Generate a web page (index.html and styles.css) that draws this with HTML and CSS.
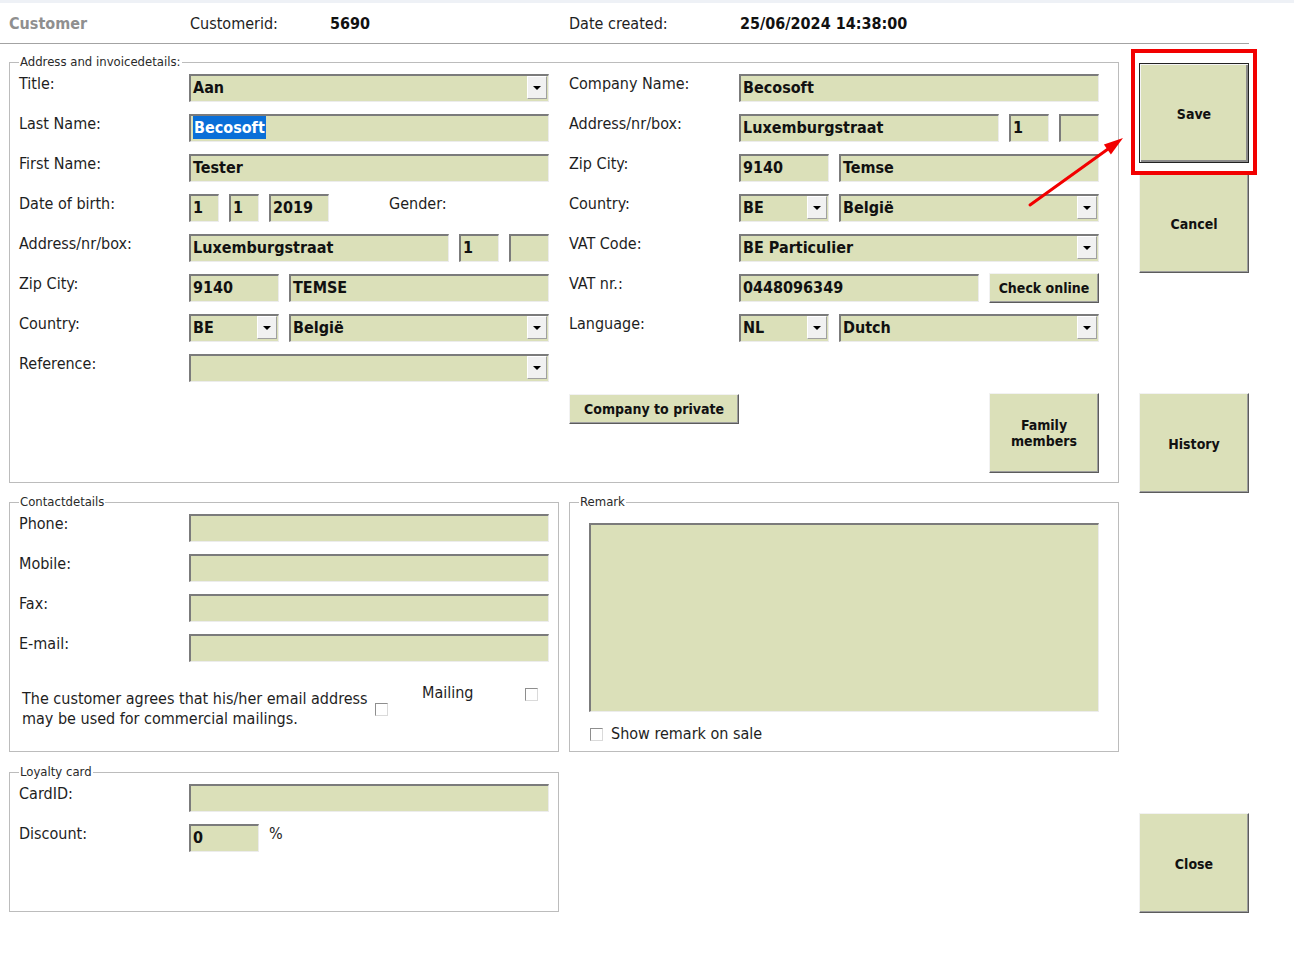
FILE: index.html
```html
<!DOCTYPE html>
<html lang="en">
  <head>
    <meta charset="UTF-8" />
    <meta name="viewport" content="width=device-width, initial-scale=1.0" />
    <title>Customer</title>
    <link rel="stylesheet" href="styles.css">
  </head>
  <body>
    <div class="top-strip"></div>

    <!-- header -->
    <div class="header">
      <span class="header-title">Customer</span>
      <span class="header-label">Customerid:</span>
      <span class="header-value header-id">5690</span>
      <span class="header-label header-date">Date created:</span>
      <span class="header-value">25/06/2024 14:38:00</span>
    </div>

    <div class="main">
      <div class="forms">
        <!-- address -->
        <fieldset class="group">
          <legend>Address and invoicedetails:</legend>
          <div class="address-cols">
            <div class="form-grid">
              <span class="label">Title:</span>
              <div class="field select"><span class="val">Aan</span><span class="drop"></span></div>

              <span class="label">Last Name:</span>
              <div class="field"><span class="val"><span class="picked">Becosoft</span></span></div>

              <span class="label">First Name:</span>
              <div class="field"><span class="val">Tester</span></div>

              <span class="label">Date of birth:</span>
              <div class="field-row">
                <div class="field w30"><span class="val">1</span></div>
                <div class="field w30"><span class="val">1</span></div>
                <div class="field w60"><span class="val">2019</span></div>
                <span class="label gender">Gender:</span>
              </div>

              <span class="label">Address/nr/box:</span>
              <div class="field-row">
                <div class="field w260"><span class="val">Luxemburgstraat</span></div>
                <div class="field w40"><span class="val">1</span></div>
                <div class="field w40"><span class="val"></span></div>
              </div>

              <span class="label">Zip City:</span>
              <div class="field-row">
                <div class="field w90"><span class="val">9140</span></div>
                <div class="field w260"><span class="val">TEMSE</span></div>
              </div>

              <span class="label">Country:</span>
              <div class="field-row">
                <div class="field select w90"><span class="val">BE</span><span class="drop"></span></div>
                <div class="field select w260"><span class="val">België</span><span class="drop"></span></div>
              </div>

              <span class="label">Reference:</span>
              <div class="field select"><span class="val"></span><span class="drop"></span></div>
            </div>

            <div class="right-col">
              <div class="form-grid rows-8">
                <span class="label">Company Name:</span>
                <div class="field"><span class="val">Becosoft</span></div>

                <span class="label">Address/nr/box:</span>
                <div class="field-row">
                  <div class="field w260"><span class="val">Luxemburgstraat</span></div>
                  <div class="field w40"><span class="val">1</span></div>
                  <div class="field w40"><span class="val"></span></div>
                </div>

                <span class="label">Zip City:</span>
                <div class="field-row">
                  <div class="field w90"><span class="val">9140</span></div>
                  <div class="field w260"><span class="val">Temse</span></div>
                </div>

                <span class="label">Country:</span>
                <div class="field-row">
                  <div class="field select w90"><span class="val">BE</span><span class="drop"></span></div>
                  <div class="field select w260"><span class="val">België</span><span class="drop"></span></div>
                </div>

                <span class="label">VAT Code:</span>
                <div class="field select"><span class="val">BE Particulier</span><span class="drop"></span></div>

                <span class="label">VAT nr.:</span>
                <div class="field-row">
                  <div class="field w240"><span class="val">0448096349</span></div>
                  <button type="button" class="btn btn-check">Check online</button>
                </div>

                <span class="label">Language:</span>
                <div class="field-row">
                  <div class="field select w90"><span class="val">NL</span><span class="drop"></span></div>
                  <div class="field select w260"><span class="val">Dutch</span><span class="drop"></span></div>
                </div>
              </div>

              <div class="actions">
                <button type="button" class="btn btn-private">Company to private</button>
                <button type="button" class="btn btn-family">Family<br />members</button>
              </div>
            </div>
          </div>
        </fieldset>

        <div class="group-row">
          <!-- contact -->
          <fieldset class="group half">
            <legend>Contactdetails</legend>
            <div class="form-grid">
              <span class="label">Phone:</span>
              <div class="field"><span class="val"></span></div>
              <span class="label">Mobile:</span>
              <div class="field"><span class="val"></span></div>
              <span class="label">Fax:</span>
              <div class="field"><span class="val"></span></div>
              <span class="label">E-mail:</span>
              <div class="field"><span class="val"></span></div>
            </div>
            <div class="consent">
              <span class="consent-text">The customer agrees that his/her email address<br />may be used for commercial mailings.</span>
              <span class="check check-consent"></span>
              <span class="mailing">Mailing</span>
              <span class="check check-mailing"></span>
            </div>
          </fieldset>

          <!-- remark -->
          <fieldset class="group half">
            <legend>Remark</legend>
            <div class="field remark"></div>
            <div class="remark-check">
              <span class="check"></span>
              <span>Show remark on sale</span>
            </div>
          </fieldset>
        </div>

        <!-- loyalty -->
        <fieldset class="group half loyalty">
          <legend>Loyalty card</legend>
          <div class="form-grid">
            <span class="label">CardID:</span>
            <div class="field"><span class="val"></span></div>
            <span class="label">Discount:</span>
            <div class="field-row">
              <div class="field w70"><span class="val">0</span></div>
              <span class="label percent">%</span>
            </div>
          </div>
        </fieldset>
      </div>

      <!-- buttons right -->
      <div class="side">
        <div class="save-wrap">
          <button type="button" class="btn btn-side btn-save">Save</button>
          <div class="mark-box"></div>
        </div>
        <button type="button" class="btn btn-side btn-cancel">Cancel</button>
        <button type="button" class="btn btn-side btn-history">History</button>
        <button type="button" class="btn btn-side btn-close">Close</button>
      </div>

      <svg class="pointer" width="110" height="80" viewBox="0 0 110 80">
        <line x1="10" y1="75" x2="88" y2="19" stroke="#f20000" stroke-width="3" stroke-linecap="round" />
        <polygon points="103,8 90.9,24.4 83.9,14.6" fill="#f20000" />
      </svg>
    </div>
  </body>
</html>
```

FILE: styles.css
```css
body {
  margin: 0;
  font-family: "DejaVu Sans Condensed", "DejaVu Sans", sans-serif;
  font-stretch: condensed;
  font-size: 16px;
  color: #1e1e1e;
  background: #fff;
}

.top-strip {
  height: 3px;
  background: #eef1f6;
}

/* header */
.header {
  display: flex;
  align-items: center;
  width: 1249px;
  height: 41px;
  box-sizing: border-box;
  padding-left: 9px;
  border-bottom: 1px solid #a3a3a3;
}
.header-title {
  width: 181px;
  font-weight: bold;
  color: #8f8f8f;
}
.header-label {
  width: 140px;
}
.header-value {
  font-weight: bold;
  color: #111;
}
.header-id {
  width: 239px;
}
.header-date {
  width: 171px;
}

/* layout */
.main {
  position: relative;
  display: flex;
  gap: 20px;
  padding: 9px 0 0 9px;
}
.forms {
  width: 1110px;
}
.side {
  width: 110px;
  padding-top: 10px;
  display: flex;
  flex-direction: column;
}

.group {
  margin: 0;
  padding: 5px 19px 9px 9px;
  border: 1px solid #bcbcbc;
  min-width: 0;
}
.group legend {
  padding: 0 1px;
  font-size: 13px;
  line-height: 18px;
  color: #2a2a2a;
}
.group-row {
  display: flex;
  gap: 10px;
  margin-top: 10px;
}
.half {
  width: 550px;
  box-sizing: border-box;
  padding-right: 9px;
  padding-top: 3px;
  padding-bottom: 7px;
}
.loyalty {
  margin-top: 11px;
  padding-bottom: 59px;
}

.address-cols {
  display: flex;
  gap: 20px;
  margin-top: -2px;
}
.form-grid {
  display: grid;
  grid-template-columns: 170px 360px;
  grid-auto-rows: 28px;
  row-gap: 12px;
  align-content: start;
}
.rows-8 {
  grid-template-rows: repeat(8, 28px);
}

.label {
  padding-top: 1px;
  line-height: 18px;
  color: #1e1e1e;
}
.gender {
  margin-left: 50px;
}
.percent {
  margin-left: 0;
}

/* fields */
.field-row {
  display: flex;
  gap: 10px;
  align-items: flex-start;
}
.field {
  position: relative;
  display: flex;
  height: 28px;
  box-sizing: border-box;
  background: #dbe0b9;
  border-top: 2px solid #7b7b7b;
  border-left: 2px solid #7b7b7b;
  border-right: 1px solid #ececec;
  border-bottom: 1px solid #ececec;
}
.val {
  flex: 1;
  padding-left: 2px;
  line-height: 24px;
  font-weight: bold;
  color: #111;
  white-space: nowrap;
  overflow: hidden;
}
.picked {
  background: #0a6fd8;
  color: #fff;
  padding: 2px 1px;
}
.w30 { width: 30px; }
.w40 { width: 40px; }
.w60 { width: 60px; }
.w70 { width: 70px; }
.w90 { width: 90px; }
.w240 { width: 240px; }
.w260 { width: 260px; }

.drop {
  position: relative;
  width: 20px;
  height: 23px;
  margin: 0 1px 0 0;
  box-sizing: border-box;
  background: #f1f1f1;
  border: 1px solid;
  border-color: #fff #a0a0a0 #a0a0a0 #fff;
}
.drop::after {
  content: "";
  position: absolute;
  left: 5px;
  top: 9px;
  border-left: 4px solid transparent;
  border-right: 4px solid transparent;
  border-top: 4px solid #000;
}

/* buttons */
.btn {
  margin: 0;
  padding: 0;
  box-sizing: border-box;
  background: #dbe0b9;
  border: 1px solid;
  border-color: #f2f2f2 #5c5c5c #5c5c5c #f2f2f2;
  box-shadow: inset -1px -1px #9d9d9d;
  font-family: inherit;
  font-stretch: condensed;
  font-size: 14px;
  font-weight: bold;
  color: #111;
  line-height: 16px;
}
.btn-check {
  width: 110px;
  height: 30px;
  margin-top: -1px;
}
.actions {
  display: flex;
  justify-content: space-between;
  align-items: flex-start;
  margin-top: 12px;
}
.btn-private {
  width: 170px;
  height: 30px;
}
.btn-family {
  width: 110px;
  height: 80px;
  margin-top: -1px;
}

.btn-side {
  width: 110px;
  height: 100px;
  padding-top: 2px;
}
.save-wrap {
  position: relative;
  height: 100px;
}
.btn-save {
  border-color: #222;
  box-shadow: inset 1px 1px #f4f4f4, inset -2px -2px #8a8a8a;
}
.btn-cancel {
  margin-top: 10px;
}
.btn-history {
  margin-top: 120px;
}
.btn-close {
  margin-top: 320px;
}

/* annotation */
.mark-box {
  position: absolute;
  left: -8px;
  top: -14px;
  width: 126px;
  height: 126px;
  box-sizing: border-box;
  border: 4px solid #f20000;
}
.pointer {
  position: absolute;
  left: 1020px;
  top: 86px;
}

/* contact */
.consent {
  display: flex;
  align-items: flex-start;
  margin-top: 21px;
  padding-left: 3px;
}
.consent-text {
  width: 353px;
  margin-top: 6px;
  line-height: 20px;
}
.check {
  display: inline-block;
  width: 13px;
  height: 13px;
  box-sizing: border-box;
  background: #fff;
  border: 1px solid;
  border-color: #8e8e8e #dadada #dadada #8e8e8e;
}
.check-consent {
  margin-top: 20px;
}
.mailing {
  margin-left: 34px;
  width: 103px;
  line-height: 20px;
}
.check-mailing {
  margin-top: 5px;
}

/* remark */
.remark {
  height: 189px;
  margin: 9px 0 0 10px;
  width: 510px;
}
.remark-check {
  display: flex;
  align-items: center;
  gap: 8px;
  margin: 12px 0 0 11px;
  line-height: 20px;
}
```
